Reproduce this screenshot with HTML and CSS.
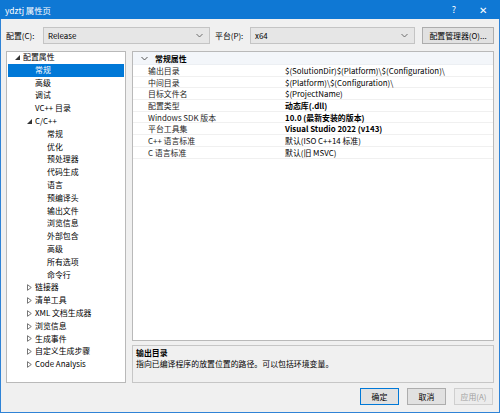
FILE: index.html
```html
<!DOCTYPE html>
<html lang="zh-CN">
<head>
    <meta charset="UTF-8">
    <title>ydztj 属性页</title>
    <link rel="stylesheet" href="styles.css">
</head>
<body>

<div class="window">
    <div class="titlebar">
        <span class="title">ydztj 属性页</span>
        <span class="title-btn">?</span>
        <span class="title-btn close">✕</span>
    </div>

    <!-- Configuration / platform selectors -->
    <div class="toolbar">
        <label class="tb-label">配置(C):</label>
        <div class="combo combo-config">
            <span>Release</span>
            <svg class="chev" width="7" height="5" viewBox="0 0 7 5"><path d="M0.5 1 L3.5 4 L6.5 1" fill="none" stroke="#606060" stroke-width="0.9"/></svg>
        </div>
        <label class="tb-label second">平台(P):</label>
        <div class="combo combo-platform">
            <span>x64</span>
            <svg class="chev" width="7" height="5" viewBox="0 0 7 5"><path d="M0.5 1 L3.5 4 L6.5 1" fill="none" stroke="#606060" stroke-width="0.9"/></svg>
        </div>
        <button class="btn btn-manager">配置管理器(O)...</button>
    </div>

    <div class="main">
        <!-- Left tree -->
        <div class="tree">
            <div class="node lvl0"><svg class="tri" width="5" height="5" viewBox="0 0 5 5"><path d="M5 0 L5 5 L0 5 Z" fill="#333"/></svg>配置属性</div>
            <div class="node lvl1 selected">常规</div>
            <div class="node lvl1">高级</div>
            <div class="node lvl1">调试</div>
            <div class="node lvl1">VC++ 目录</div>
            <div class="node lvl1 parent"><svg class="tri" width="5" height="5" viewBox="0 0 5 5"><path d="M5 0 L5 5 L0 5 Z" fill="#333"/></svg>C/C++</div>
            <div class="node lvl2">常规</div>
            <div class="node lvl2">优化</div>
            <div class="node lvl2">预处理器</div>
            <div class="node lvl2">代码生成</div>
            <div class="node lvl2">语言</div>
            <div class="node lvl2">预编译头</div>
            <div class="node lvl2">输出文件</div>
            <div class="node lvl2">浏览信息</div>
            <div class="node lvl2">外部包含</div>
            <div class="node lvl2">高级</div>
            <div class="node lvl2">所有选项</div>
            <div class="node lvl2">命令行</div>
            <div class="node lvl1 parent"><svg class="tri closed" width="5" height="7" viewBox="0 0 5 7"><path d="M0.5 0.7 L4.3 3.5 L0.5 6.3 Z" fill="none" stroke="#555" stroke-width="0.8"/></svg>链接器</div>
            <div class="node lvl1 parent"><svg class="tri closed" width="5" height="7" viewBox="0 0 5 7"><path d="M0.5 0.7 L4.3 3.5 L0.5 6.3 Z" fill="none" stroke="#555" stroke-width="0.8"/></svg>清单工具</div>
            <div class="node lvl1 parent"><svg class="tri closed" width="5" height="7" viewBox="0 0 5 7"><path d="M0.5 0.7 L4.3 3.5 L0.5 6.3 Z" fill="none" stroke="#555" stroke-width="0.8"/></svg>XML 文档生成器</div>
            <div class="node lvl1 parent"><svg class="tri closed" width="5" height="7" viewBox="0 0 5 7"><path d="M0.5 0.7 L4.3 3.5 L0.5 6.3 Z" fill="none" stroke="#555" stroke-width="0.8"/></svg>浏览信息</div>
            <div class="node lvl1 parent"><svg class="tri closed" width="5" height="7" viewBox="0 0 5 7"><path d="M0.5 0.7 L4.3 3.5 L0.5 6.3 Z" fill="none" stroke="#555" stroke-width="0.8"/></svg>生成事件</div>
            <div class="node lvl1 parent"><svg class="tri closed" width="5" height="7" viewBox="0 0 5 7"><path d="M0.5 0.7 L4.3 3.5 L0.5 6.3 Z" fill="none" stroke="#555" stroke-width="0.8"/></svg>自定义生成步骤</div>
            <div class="node lvl1 parent"><svg class="tri closed" width="5" height="7" viewBox="0 0 5 7"><path d="M0.5 0.7 L4.3 3.5 L0.5 6.3 Z" fill="none" stroke="#555" stroke-width="0.8"/></svg>Code Analysis</div>
        </div>

        <div class="right">
            <!-- Property grid -->
            <div class="grid">
                <div class="category">
                    <svg class="cat-chev" width="7" height="5" viewBox="0 0 7 5"><path d="M0.5 1 L3.5 4 L6.5 1" fill="none" stroke="#444" stroke-width="0.9"/></svg>
                    <span>常规属性</span>
                </div>
                <div class="prop"><span class="name">输出目录</span><span class="value">$(SolutionDir)$(Platform)\$(Configuration)\</span></div>
                <div class="prop"><span class="name">中间目录</span><span class="value">$(Platform)\$(Configuration)\</span></div>
                <div class="prop"><span class="name">目标文件名</span><span class="value">$(ProjectName)</span></div>
                <div class="prop"><span class="name">配置类型</span><span class="value bold">动态库(.dll)</span></div>
                <div class="prop"><span class="name">Windows SDK 版本</span><span class="value bold">10.0 (最新安装的版本)</span></div>
                <div class="prop"><span class="name">平台工具集</span><span class="value bold">Visual Studio 2022 (v143)</span></div>
                <div class="prop"><span class="name">C++ 语言标准</span><span class="value">默认(ISO C++14 标准)</span></div>
                <div class="prop"><span class="name">C 语言标准</span><span class="value">默认(旧 MSVC)</span></div>
            </div>

            <!-- Description of the selected property -->
            <div class="description">
                <div class="desc-title">输出目录</div>
                <div class="desc-text">指向已编译程序的放置位置的路径。可以包括环境变量。</div>
            </div>
        </div>
    </div>

    <div class="footer">
        <button class="btn btn-default">确定</button>
        <button class="btn">取消</button>
        <button class="btn" disabled>应用(A)</button>
    </div>
</div>

</body>
</html>
```

FILE: styles.css
```css
body {
    margin: 0;
    font-family: "Noto Sans CJK SC", "Noto Sans", sans-serif;
    font-size: 7.9px;
    color: #000;
    background: #fff;
}

.window {
    width: 500px;
    height: 413px;
    box-sizing: border-box;
    border: 1px solid #2f83d6;
    border-top: none;
    background-color: #f0f0f0;
    display: flex;
    flex-direction: column;
}

/* Title bar */
.titlebar {
    height: 19px;
    background-color: #0f78d4;
    color: #fff;
    display: flex;
    align-items: center;
    padding-left: 5px;
    margin: 0 -1px;
}

.title {
    flex: 1;
    font-size: 8.4px;
}

.title-btn {
    width: 28px;
    text-align: center;
    font-size: 9px;
}

.title-btn.close {
    width: 30px;
    margin-right: 2px;
    font-size: 10px;
}

/* Toolbar */
.toolbar {
    display: flex;
    align-items: center;
    height: 17px;
    margin-top: 8px;
    padding: 0 5px;
}

.tb-label {
    width: 37px;
    flex-shrink: 0;
    white-space: nowrap;
}

.tb-label.second {
    width: 35px;
}

.combo {
    height: 17px;
    box-sizing: border-box;
    border: 1px solid #c4c4c4;
    background-color: #e6e6e6;
    display: flex;
    align-items: center;
    padding: 0 5px 0 4px;
    flex-shrink: 0;
}

.combo span {
    flex: 1;
}

.combo-config {
    width: 167px;
    margin-right: 5px;
}

.combo-platform {
    width: 165px;
    margin-right: 7px;
}

.chev {
    margin-right: 1px;
}

.btn {
    height: 17px;
    box-sizing: border-box;
    border: 1px solid #adadad;
    background-color: #e1e1e1;
    font-family: inherit;
    font-size: inherit;
    padding: 0;
    color: #000;
    white-space: nowrap;
}

.btn-manager {
    width: 72px;
    flex-shrink: 0;
}

/* Main area */
.main {
    display: flex;
    margin-top: 7px;
    padding: 0 5px 0 5px;
    height: 332px;
}

.tree {
    width: 120px;
    box-sizing: border-box;
    border: 1px solid #b9b9b9;
    background-color: #fff;
    padding: 0 1px;
    margin-right: 6px;
}

.node {
    height: 12.8px;
    line-height: 12.8px;
    white-space: nowrap;
    display: flex;
    align-items: center;
}

.node:first-child {
    margin-top: -1px;
}

.node.lvl0 {
    padding-left: 7px;
}

.node.lvl1 {
    padding-left: 27px;
}

.node.lvl2 {
    padding-left: 39px;
}

.node.parent {
    padding-left: 19px;
}

.tri {
    margin-right: 3px;
}

.node.selected {
    background-color: #0078d7;
    color: #fff;
}

.right {
    flex: 1;
    display: flex;
    flex-direction: column;
}

/* Property grid */
.grid {
    height: 290px;
    box-sizing: border-box;
    border: 1px solid #b9b9b9;
    background-color: #fff;
}

.category {
    height: 12px;
    display: flex;
    align-items: center;
    background-color: #f3f6fa;
    border-bottom: 1px solid #eceff3;
    font-weight: bold;
    padding-left: 8px;
}

.cat-chev {
    margin-right: 7px;
}

.prop {
    height: 11.7px;
    line-height: 11px;
    display: grid;
    grid-template-columns: 149px 1fr;
    border-bottom: 1px solid #f0f0f0;
    box-sizing: border-box;
    white-space: nowrap;
}

.prop .name {
    padding-left: 15px;
    color: #1e1e1e;
}

.prop .value {
    padding-left: 3px;
    overflow: hidden;
}

.bold {
    font-weight: bold;
}

/* Description box */
.description {
    margin-top: 4px;
    height: 38px;
    box-sizing: border-box;
    border: 1px solid #c6c6c6;
    background-color: #f0f0f0;
    padding: 1px 3px;
    line-height: 11px;
}

.desc-title {
    font-weight: bold;
}

/* Dialog buttons */
.footer {
    display: flex;
    justify-content: flex-end;
    margin-top: 5px;
    padding-right: 6px;
}

.footer .btn {
    width: 39px;
    margin-left: 8px;
}

.btn-default {
    border-color: #0078d7;
}

.btn[disabled] {
    background-color: #ececec;
    border-color: #cfcfcf;
    color: #a0a0a0;
}
```
